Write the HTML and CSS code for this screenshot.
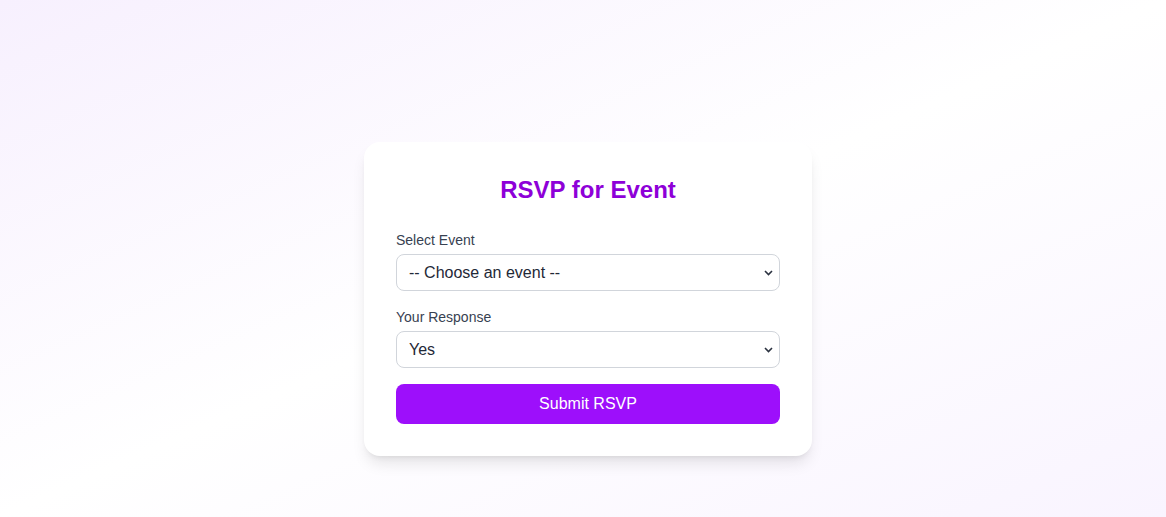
FILE: index.html
```html
<!DOCTYPE html>
<html lang="en">
<head>
<meta charset="utf-8">
<title>RSVP for Event</title>
<link rel="stylesheet" href="styles.css">
</head>
<body>
<main class="page">
  <form class="card">
    <h1 class="title">RSVP for Event</h1>
    <div class="field">
      <label class="label" for="event">Select Event</label>
      <div class="select-wrap">
        <select class="select" id="event">
          <option>-- Choose an event --</option>
        </select>
        <svg class="chevron" width="9" height="6" viewBox="0 0 9 6"><path d="M1 1l3.5 3.5L8 1" fill="none" stroke="#2b3240" stroke-width="1.6"/></svg>
      </div>
    </div>
    <div class="field">
      <label class="label" for="response">Your Response</label>
      <div class="select-wrap">
        <select class="select" id="response">
          <option>Yes</option>
          <option>No</option>
          <option>Maybe</option>
        </select>
        <svg class="chevron" width="9" height="6" viewBox="0 0 9 6"><path d="M1 1l3.5 3.5L8 1" fill="none" stroke="#2b3240" stroke-width="1.6"/></svg>
      </div>
    </div>
    <button class="submit" type="button">Submit RSVP</button>
  </form>
</main>
</body>
</html>
```

FILE: styles.css
```css
* { box-sizing: border-box; }
html, body { margin: 0; height: 100%; }
body {
  font-family: "Liberation Sans", Arial, sans-serif;
  background: linear-gradient(to bottom right, #f7f0fe 0%, #ffffff 50%, #f9f4ff 100%);
  min-height: 517px;
}
.page {
  display: flex;
  justify-content: center;
  padding-top: 142px;
  padding-left: 10px;
}
.card {
  width: 448px;
  background: #ffffff;
  border-radius: 16px;
  padding: 32px;
  box-shadow: 0 10px 15px -3px rgba(0,0,0,0.1), 0 4px 6px -4px rgba(0,0,0,0.1);
}
.title {
  margin: 0 0 24px;
  font-size: 24px;
  line-height: 32px;
  font-weight: 700;
  text-align: center;
  color: #8e00d8;
}
.field { margin-bottom: 16px; }
.label {
  display: block;
  font-size: 14px;
  line-height: 20px;
  color: #374151;
  margin-bottom: 4px;
}
.select-wrap { position: relative; }
.select {
  display: block;
  width: 100%;
  height: 37px;
  padding: 0 12px;
  font-family: "Liberation Sans", Arial, sans-serif;
  font-size: 16px;
  color: #1f2937;
  background: #ffffff;
  border: 1px solid #d1d5db;
  border-radius: 8px;
  appearance: none;
  -webkit-appearance: none;
}
.chevron {
  position: absolute;
  right: 7px;
  top: 16px;
  pointer-events: none;
}
.submit {
  display: block;
  width: 100%;
  height: 40px;
  border: none;
  border-radius: 8px;
  background: #9d0ffb;
  color: #ffffff;
  font-family: "Liberation Sans", Arial, sans-serif;
  font-size: 16px;
  line-height: 24px;
  cursor: pointer;
}
```
